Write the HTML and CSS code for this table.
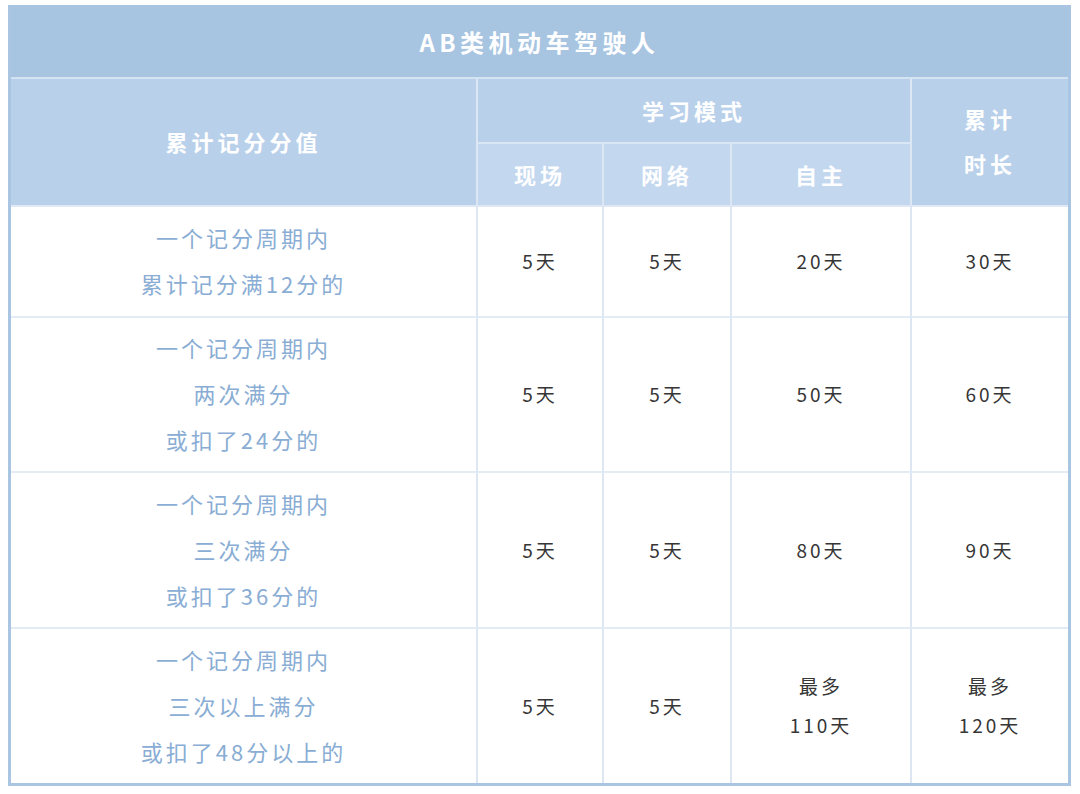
FILE: index.html
```html
<!DOCTYPE html>
<html lang="zh">
<head>
<meta charset="utf-8">
<title>AB类机动车驾驶人</title>
<link rel="stylesheet" href="styles.css">
</head>
<body>
<div class="frame">
  <table class="grid">
    <colgroup>
      <col class="c1"><col class="c2"><col class="c3"><col class="c4"><col class="c5">
    </colgroup>
    <thead>
      <tr class="r-title"><th colspan="5" class="title">AB类机动车驾驶人</th></tr>
      <tr class="r-h1">
        <th rowspan="2" class="h vr">累计记分分值</th>
        <th colspan="3" class="h vr hb">学习模式</th>
        <th rowspan="2" class="h two">累计<br>时长</th>
      </tr>
      <tr class="r-h2">
        <th class="sub vr">现场</th>
        <th class="sub vr">网络</th>
        <th class="sub vr">自主</th>
      </tr>
    </thead>
    <tbody>
      <tr class="r1">
        <td class="desc vr">一个记分周期内<br>累计记分满12分的</td>
        <td class="val vr">5天</td>
        <td class="val vr">5天</td>
        <td class="val vr">20天</td>
        <td class="val">30天</td>
      </tr>
      <tr class="r2">
        <td class="desc vr">一个记分周期内<br>两次满分<br>或扣了24分的</td>
        <td class="val vr">5天</td>
        <td class="val vr">5天</td>
        <td class="val vr">50天</td>
        <td class="val">60天</td>
      </tr>
      <tr class="r3">
        <td class="desc vr">一个记分周期内<br>三次满分<br>或扣了36分的</td>
        <td class="val vr">5天</td>
        <td class="val vr">5天</td>
        <td class="val vr">80天</td>
        <td class="val">90天</td>
      </tr>
      <tr class="r4 last">
        <td class="desc vr">一个记分周期内<br>三次以上满分<br>或扣了48分以上的</td>
        <td class="val vr">5天</td>
        <td class="val vr">5天</td>
        <td class="val vr multi">最多<br>110天</td>
        <td class="val multi">最多<br>120天</td>
      </tr>
    </tbody>
  </table>
</div>
</body>
</html>
```
FILE: styles.css
```css
html, body {
  margin: 0;
  padding: 0;
  background: #ffffff;
}
body {
  font-family: "Noto Sans CJK SC", "Noto Sans", sans-serif;
}
.frame {
  margin: 5px 0 0 8px;
  width: 1057px;
  border: 3px solid #a9c5e1;
  background: #ffffff;
}
.grid {
  width: 1057px;
  table-layout: fixed;
  border-collapse: separate;
  border-spacing: 0;
}
.c1 { width: 467px; }
.c2 { width: 126px; }
.c3 { width: 128px; }
.c4 { width: 180px; }
.c5 { width: 156px; }

th, td {
  box-sizing: border-box;
  padding: 0;
  text-align: center;
  vertical-align: middle;
}
.title {
  height: 71px;
  background: #a7c4e1;
  color: #ffffff;
  font-size: 24px;
  font-weight: 700;
  letter-spacing: 4.5px;
  border-bottom: 2px solid #d4e3f2;
  padding-bottom: 3px;
}
.h {
  background: #b9d0ea;
  color: #ffffff;
  font-size: 22px;
  font-weight: 700;
  letter-spacing: 4px;
  padding-bottom: 2px;
}
.r-h1 > th.hb { height: 65px; }
.r-h2 > th { height: 63px; }
.hb { border-bottom: 2px solid #d9e6f4; }
.two { line-height: 45px; border-bottom: 2px solid #dfe8f4; }
.r-h1 > th:first-child { border-bottom: 2px solid #dfe8f4; }
.sub {
  background: #c3d7ef;
  color: #ffffff;
  font-size: 22px;
  font-weight: 700;
  letter-spacing: 4px;
  border-bottom: 2px solid #dfe8f4;
  padding-bottom: 2px;
}
.vr { border-right: 2px solid #dde7f3; }

.r1 > td { height: 111px; }
.r2 > td { height: 155px; }
.r3 > td { height: 156px; }
.r4 > td { height: 154px; }
tbody tr:not(.last) > td { border-bottom: 2px solid #e3ebf5; }

.desc {
  color: #89add4;
  font-size: 22px;
  line-height: 46px;
  letter-spacing: 3px;
  padding-bottom: 3px;
}
.val {
  color: #363636;
  font-size: 19px;
  letter-spacing: 3px;
  padding-bottom: 2px;
}
.multi { line-height: 39px; }
```
